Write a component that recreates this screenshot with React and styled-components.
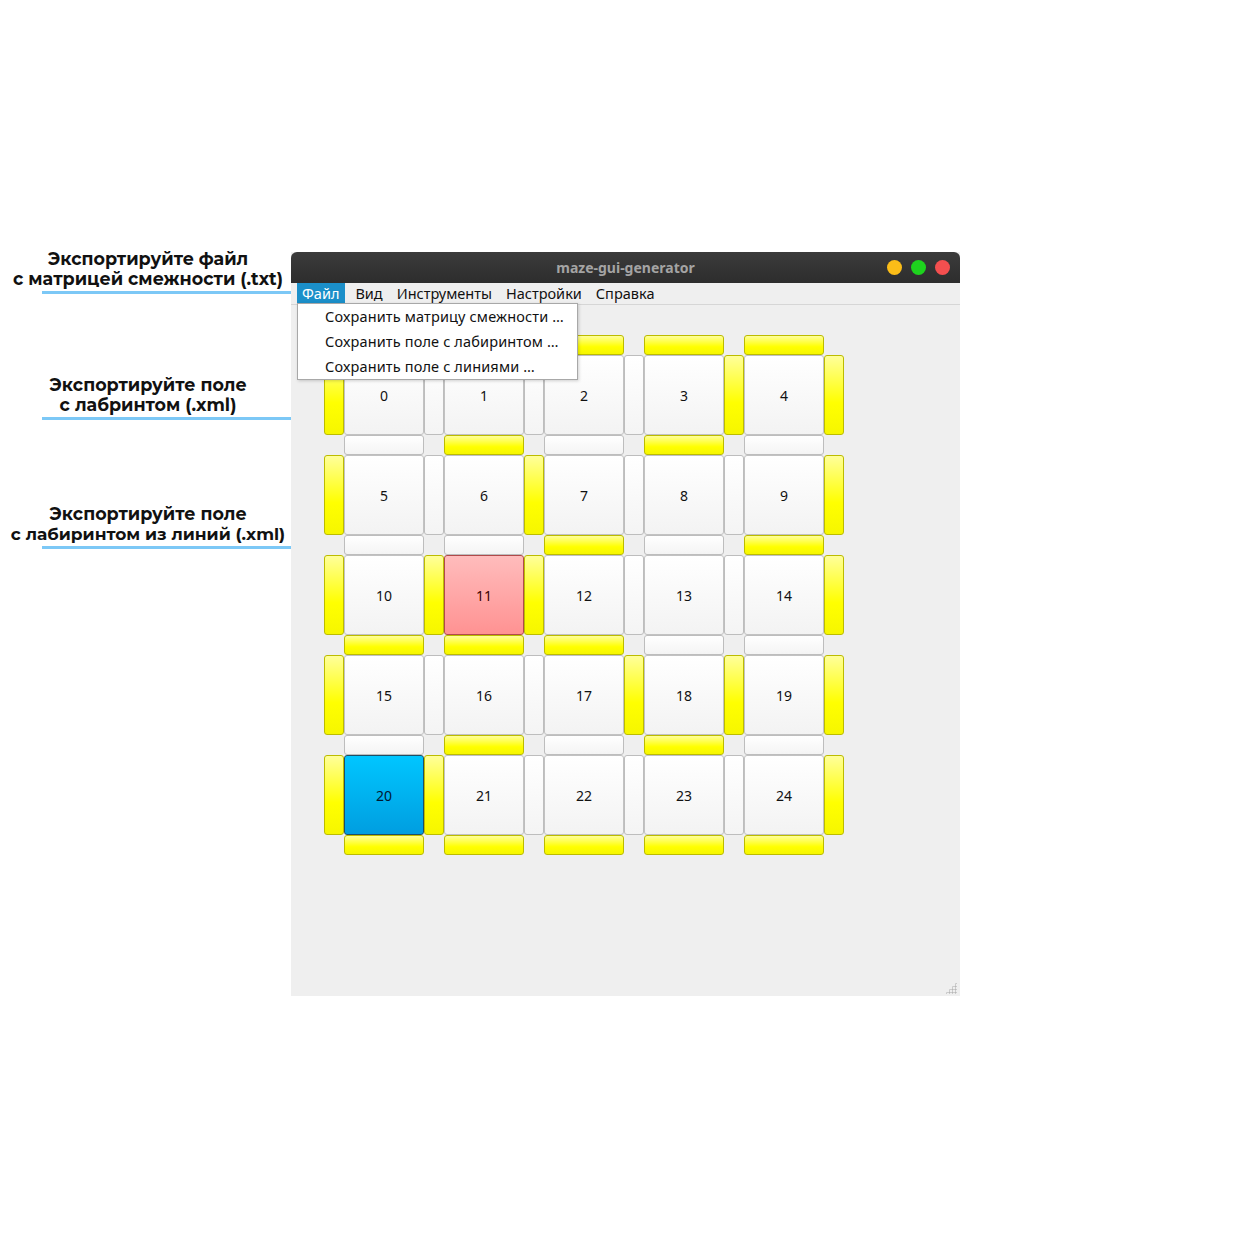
import React from "react";
import styled, { createGlobalStyle } from "styled-components";

const Global = createGlobalStyle`
  html, body { margin: 0; padding: 0; background: #ffffff; }
  body { font-family: "Noto Sans", "DejaVu Sans", sans-serif; }
`;

const Page = styled.div`
  width: 1250px;
  height: 1250px;
  display: flex;
  align-items: flex-start;
  padding-top: 249px;
  box-sizing: border-box;
`;

const Notes = styled.div`
  width: 291px;
  display: flex;
  flex-direction: column;
  align-items: flex-end;
`;

const Note = styled.div`
  margin-top: ${(p) => p.$top}px;
  width: 291px;
  display: flex;
  flex-direction: column;
  align-items: stretch;
`;

const NoteText = styled.div`
  font-family: "Montserrat", "Inter", "Lato", sans-serif;
  font-weight: 700;
  font-size: ${(p) => p.$size || 17.5}px;
  line-height: 20px;
  color: #111;
  text-align: center;
  padding-left: 5px;
  white-space: nowrap;
`;

const NoteLine = styled.div`
  margin-top: 2px;
  margin-left: 42px;
  height: 3px;
  background: #7cc8f6;
`;

const Window = styled.div`
  width: 669px;
  height: 744px;
  margin-top: 3px;
  display: flex;
  flex-direction: column;
  background: #efefef;
  position: relative;
`;

const TitleBar = styled.div`
  height: 31px;
  border-radius: 6px 6px 0 0;
  background: linear-gradient(#3b3b3b, #2d2d2d);
  display: flex;
  align-items: center;
  justify-content: center;
  position: relative;
`;

const Title = styled.div`
  font-family: "Noto Sans", "DejaVu Sans", sans-serif;
  font-weight: 700;
  font-size: 14px;
  color: #a4a4a4;
`;

const Lights = styled.div`
  position: absolute;
  right: 10px;
  top: 8px;
  display: flex;
  gap: 9px;
`;

const Light = styled.div`
  width: 15px;
  height: 15px;
  border-radius: 50%;
  background: ${(p) => p.$c};
`;

const MenuBar = styled.div`
  height: 21px;
  border-bottom: 1px solid #d6d6d6;
  background: #efefef;
  display: flex;
  align-items: stretch;
  padding-left: 6px;
  position: relative;
`;

const MenuItem = styled.div`
  font-size: 14.5px;
  line-height: 21px;
  padding: ${(p) => (p.$first ? "0 6px 0 5px" : "0 7px")};
  margin-right: ${(p) => (p.$first ? 3 : 0)}px;
  color: ${(p) => (p.$active ? "#ffffff" : "#111111")};
  background: ${(p) => (p.$active ? "#1b8fc9" : "transparent")};
`;

const Dropdown = styled.div`
  position: absolute;
  left: 6px;
  top: 20px;
  width: 279px;
  padding: 0;
  background: #ffffff;
  border: 1px solid #a8a8a8;
  box-shadow: 1px 1px 3px rgba(0, 0, 0, 0.18);
  z-index: 5;
`;

const DropItem = styled.div`
  height: 25px;
  line-height: 25px;
  padding-left: 27px;
  font-size: 14.5px;
  letter-spacing: 0.15px;
  color: #111;
  white-space: nowrap;
`;

const Content = styled.div`
  flex: 1;
  padding: 30px 0 0 33px;
  position: relative;
`;

const Board = styled.div`
  display: grid;
  grid-template-columns: repeat(5, 20px 80px) 20px;
  grid-template-rows: repeat(5, 20px 80px) 20px;
`;

const Corner = styled.div``;

const Wall = styled.div`
  box-sizing: border-box;
  border-radius: 3px;
  border: 1px solid ${(p) => (p.$on ? "#bcbc00" : "#bdbdbd")};
  background: ${(p) =>
    p.$on
      ? "linear-gradient(#ffff9a, #ffff00 60%, #f6f600)"
      : "linear-gradient(#ffffff, #f4f4f4)"};
`;

const Cell = styled.div`
  box-sizing: border-box;
  border-radius: 3px;
  border: 1px solid ${(p) => p.$border};
  background: ${(p) => p.$bg};
  display: flex;
  align-items: center;
  justify-content: center;
  font-size: 14px;
  color: ${(p) => p.$color};
`;

const Grip = styled.div`
  position: absolute;
  right: 3px;
  bottom: 2px;
  width: 12px;
  height: 12px;
  background-image: radial-gradient(circle, #b8b8b8 0.9px, transparent 1.2px);
  background-size: 3px 3px;
  clip-path: polygon(100% 0, 100% 100%, 0 100%);
`;

const hWalls = [
  [1, 1, 1, 1, 1],
  [0, 1, 0, 1, 0],
  [0, 0, 1, 0, 1],
  [1, 1, 1, 0, 0],
  [0, 1, 0, 1, 0],
  [1, 1, 1, 1, 1],
];

const vWalls = [
  [1, 0, 0, 0, 1, 1],
  [1, 0, 1, 0, 0, 1],
  [1, 1, 1, 0, 0, 1],
  [1, 0, 0, 1, 1, 1],
  [1, 1, 0, 0, 0, 1],
];

const cellStyle = (n) => {
  if (n === 11)
    return { bg: "linear-gradient(#ffbcbc, #ff9292)", border: "#b04a4a", color: "#3a0000" };
  if (n === 20)
    return { bg: "linear-gradient(#00c6ff, #009ee0)", border: "#1d4f66", color: "#001830" };
  return { bg: "linear-gradient(#ffffff, #f3f3f3)", border: "#c2c2c2", color: "#111" };
};

function BoardView() {
  const items = [];
  for (let r = 0; r < 11; r++) {
    for (let c = 0; c < 11; c++) {
      const key = `${r}-${c}`;
      if (r % 2 === 0 && c % 2 === 0) items.push(<Corner key={key} />);
      else if (r % 2 === 0) items.push(<Wall key={key} $on={hWalls[r / 2][(c - 1) / 2]} />);
      else if (c % 2 === 0) items.push(<Wall key={key} $on={vWalls[(r - 1) / 2][c / 2]} />);
      else {
        const n = ((r - 1) / 2) * 5 + (c - 1) / 2;
        const s = cellStyle(n);
        items.push(
          <Cell key={key} $bg={s.bg} $border={s.border} $color={s.color}>
            {n}
          </Cell>
        );
      }
    }
  }
  return <Board>{items}</Board>;
}

export default function App() {
  return (
    <>
      <Global />
      <Page>
        <Notes>
          <Note $top={0}>
            <NoteText>Экспортируйте файл</NoteText>
            <NoteText>с матрицей смежности (.txt)</NoteText>
            <NoteLine />
          </Note>
          <Note $top={81}>
            <NoteText>Экспортируйте поле</NoteText>
            <NoteText>с лабринтом (.xml)</NoteText>
            <NoteLine />
          </Note>
          <Note $top={84}>
            <NoteText>Экспортируйте поле</NoteText>
            <NoteText $size={17}>с лабиринтом из линий (.xml)</NoteText>
            <NoteLine />
          </Note>
        </Notes>
        <Window>
          <TitleBar>
            <Title>maze-gui-generator</Title>
            <Lights>
              <Light $c="#fbbd18" />
              <Light $c="#1ed31e" />
              <Light $c="#f44f4f" />
            </Lights>
          </TitleBar>
          <MenuBar>
            <MenuItem $active $first>Файл</MenuItem>
            <MenuItem>Вид</MenuItem>
            <MenuItem>Инструменты</MenuItem>
            <MenuItem>Настройки</MenuItem>
            <MenuItem>Справка</MenuItem>
            <Dropdown>
              <DropItem>Сохранить матрицу смежности …</DropItem>
              <DropItem>Сохранить поле с лабиринтом …</DropItem>
              <DropItem>Сохранить поле с линиями …</DropItem>
            </Dropdown>
          </MenuBar>
          <Content>
            <BoardView />
            <Grip />
          </Content>
        </Window>
      </Page>
    </>
  );
}
